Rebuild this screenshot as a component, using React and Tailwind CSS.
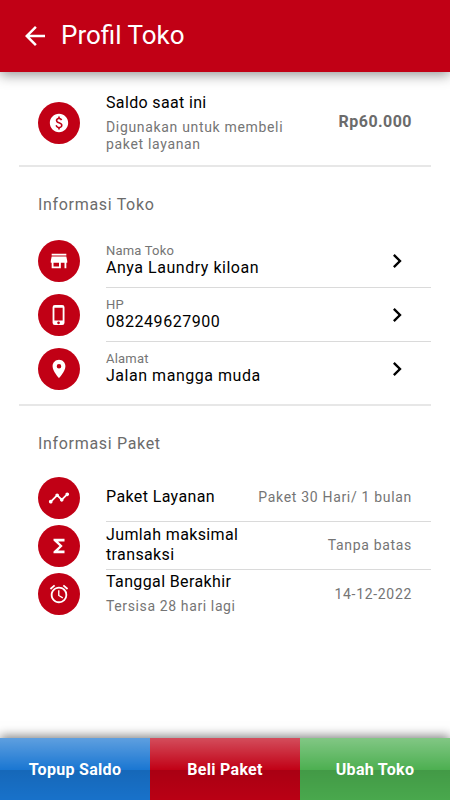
import {
  MdAlarm,
  MdArrowBack,
  MdChevronRight,
  MdFunctions,
  MdLocationOn,
  MdPaid,
  MdPhoneIphone,
  MdStore,
  MdTimeline,
} from 'react-icons/md';

const storeInfo = [
  { label: 'Nama Toko', value: 'Anya Laundry kiloan', icon: MdStore },
  { label: 'HP', value: '082249627900', icon: MdPhoneIphone },
  { label: 'Alamat', value: 'Jalan mangga muda', icon: MdLocationOn },
];

const packageInfo = [
  { title: 'Paket Layanan', value: 'Paket 30 Hari/ 1 bulan', icon: MdTimeline },
  { title: 'Jumlah maksimal transaksi', value: 'Tanpa batas', icon: MdFunctions },
  { title: 'Tanggal Berakhir', note: 'Tersisa 28 hari lagi', value: '14-12-2022', icon: MdAlarm },
];

const actions = [
  { name: 'Topup Saldo', color: 'bg-[#1976d2]' },
  { name: 'Beli Paket', color: 'bg-[#c10015]' },
  { name: 'Ubah Toko', color: 'bg-[#4caf50]' },
];

const IconCircle = ({ icon: Icon }) => (
  <div className="flex size-[42px] shrink-0 items-center justify-center rounded-full bg-[#c10015] text-white">
    <Icon size={22} />
  </div>
);

const SectionTitle = ({ children }) => (
  <h2 className="px-[19px] text-base leading-6 tracking-[0.68px] text-[#6b6b6b]">{children}</h2>
);

const App = () => {
  return (
    <div className="flex h-screen flex-col overflow-hidden bg-white font-['Roboto',sans-serif] text-black">
      <header className="z-10 flex h-[72px] shrink-0 items-center bg-[#c10015] pl-[20px] text-white shadow-[0_3px_12px_rgba(0,0,0,0.42)]">
        <button title="Kembali">
          <MdArrowBack size={30} />
        </button>
        <h1 className="ml-[11px] pb-[3px] text-[26px] leading-8">Profil Toko</h1>
      </header>

      <main className="flex-1 px-[19px]">
        {/* Balance */}
        <section className="flex h-[95px] items-center border-b-2 border-[#e7e7e7] px-[19px] pt-[8px]">
          <IconCircle icon={MdPaid} />
          <div className="ml-[26px] w-[190px]">
            <p className="text-base leading-5 tracking-[0.35px]">Saldo saat ini</p>
            <p className="mt-[6px] text-sm leading-[17px] tracking-[0.67px] text-[#757575]">
              Digunakan untuk membeli paket layanan
            </p>
          </div>
          <p className="ml-auto pb-0.5 text-base font-bold tracking-[0.45px] text-[#6b6b6b]">Rp60.000</p>
        </section>

        {/* Store info */}
        <section className="border-b-2 border-[#e7e7e7] pt-[26px] pb-[8px]">
          <SectionTitle>Informasi Toko</SectionTitle>
          <div className="mt-[17px]">
            {storeInfo.map((item, index) => (
              <div key={item.label} className="flex h-[54px] pl-[19px]">
                <div className="flex items-center">
                  <IconCircle icon={item.icon} />
                </div>
                <div
                  className={`ml-[26px] flex flex-1 items-center justify-between pr-[20px] ${
                    index < storeInfo.length - 1 ? 'border-b border-[#dadada]' : 'pb-px'
                  }`}
                >
                  <div className="pb-px">
                    <p className="text-[13px] leading-4 tracking-[0.2px] text-[#757575]">{item.label}</p>
                    <p className="-mt-px text-base leading-5 tracking-[0.53px]">{item.value}</p>
                  </div>
                  <MdChevronRight size={28} />
                </div>
              </div>
            ))}
          </div>
        </section>

        {/* Package info */}
        <section className="pt-[26px]">
          <SectionTitle>Informasi Paket</SectionTitle>
          <div className="mt-[18px]">
            {packageInfo.map((item, index) => (
              <div key={item.title} className="flex h-12 pl-[19px]">
                <div className="flex items-center pb-px">
                  <IconCircle icon={item.icon} />
                </div>
                <div
                  className={`ml-[26px] flex flex-1 items-center justify-between pr-[19px] ${
                    index < packageInfo.length - 1 ? 'border-b border-[#dadada]' : ''
                  }`}
                >
                  <div className="max-w-[150px] pb-px">
                    <p className="text-base leading-5 tracking-[0.38px]">{item.title}</p>
                    {item.note && (
                      <p className="mt-[6px] text-sm leading-[17px] tracking-[0.62px] text-[#757575]">{item.note}</p>
                    )}
                  </div>
                  <p
                    className={`text-sm tracking-[0.68px] whitespace-nowrap text-[#757575] ${item.note ? '' : 'pb-0.5'}`}
                  >
                    {item.value}
                  </p>
                </div>
              </div>
            ))}
          </div>
        </section>
      </main>

      <footer className="grid h-[62px] shrink-0 grid-cols-3 shadow-[0_-2px_10px_rgba(0,0,0,0.5)]">
        {actions.map((action) => (
          <button key={action.name} className={`${action.color} text-base font-bold text-white`}>
            {/* glossy overlay */}
            <span className="flex h-full items-center justify-center bg-[linear-gradient(rgba(255,255,255,0.3),rgba(255,255,255,0)_52%,rgba(0,0,0,0.12)_52%,rgba(0,0,0,0.04))] pt-px tracking-[0.3px]">
              {action.name}
            </span>
          </button>
        ))}
      </footer>
    </div>
  );
};

export default App;
